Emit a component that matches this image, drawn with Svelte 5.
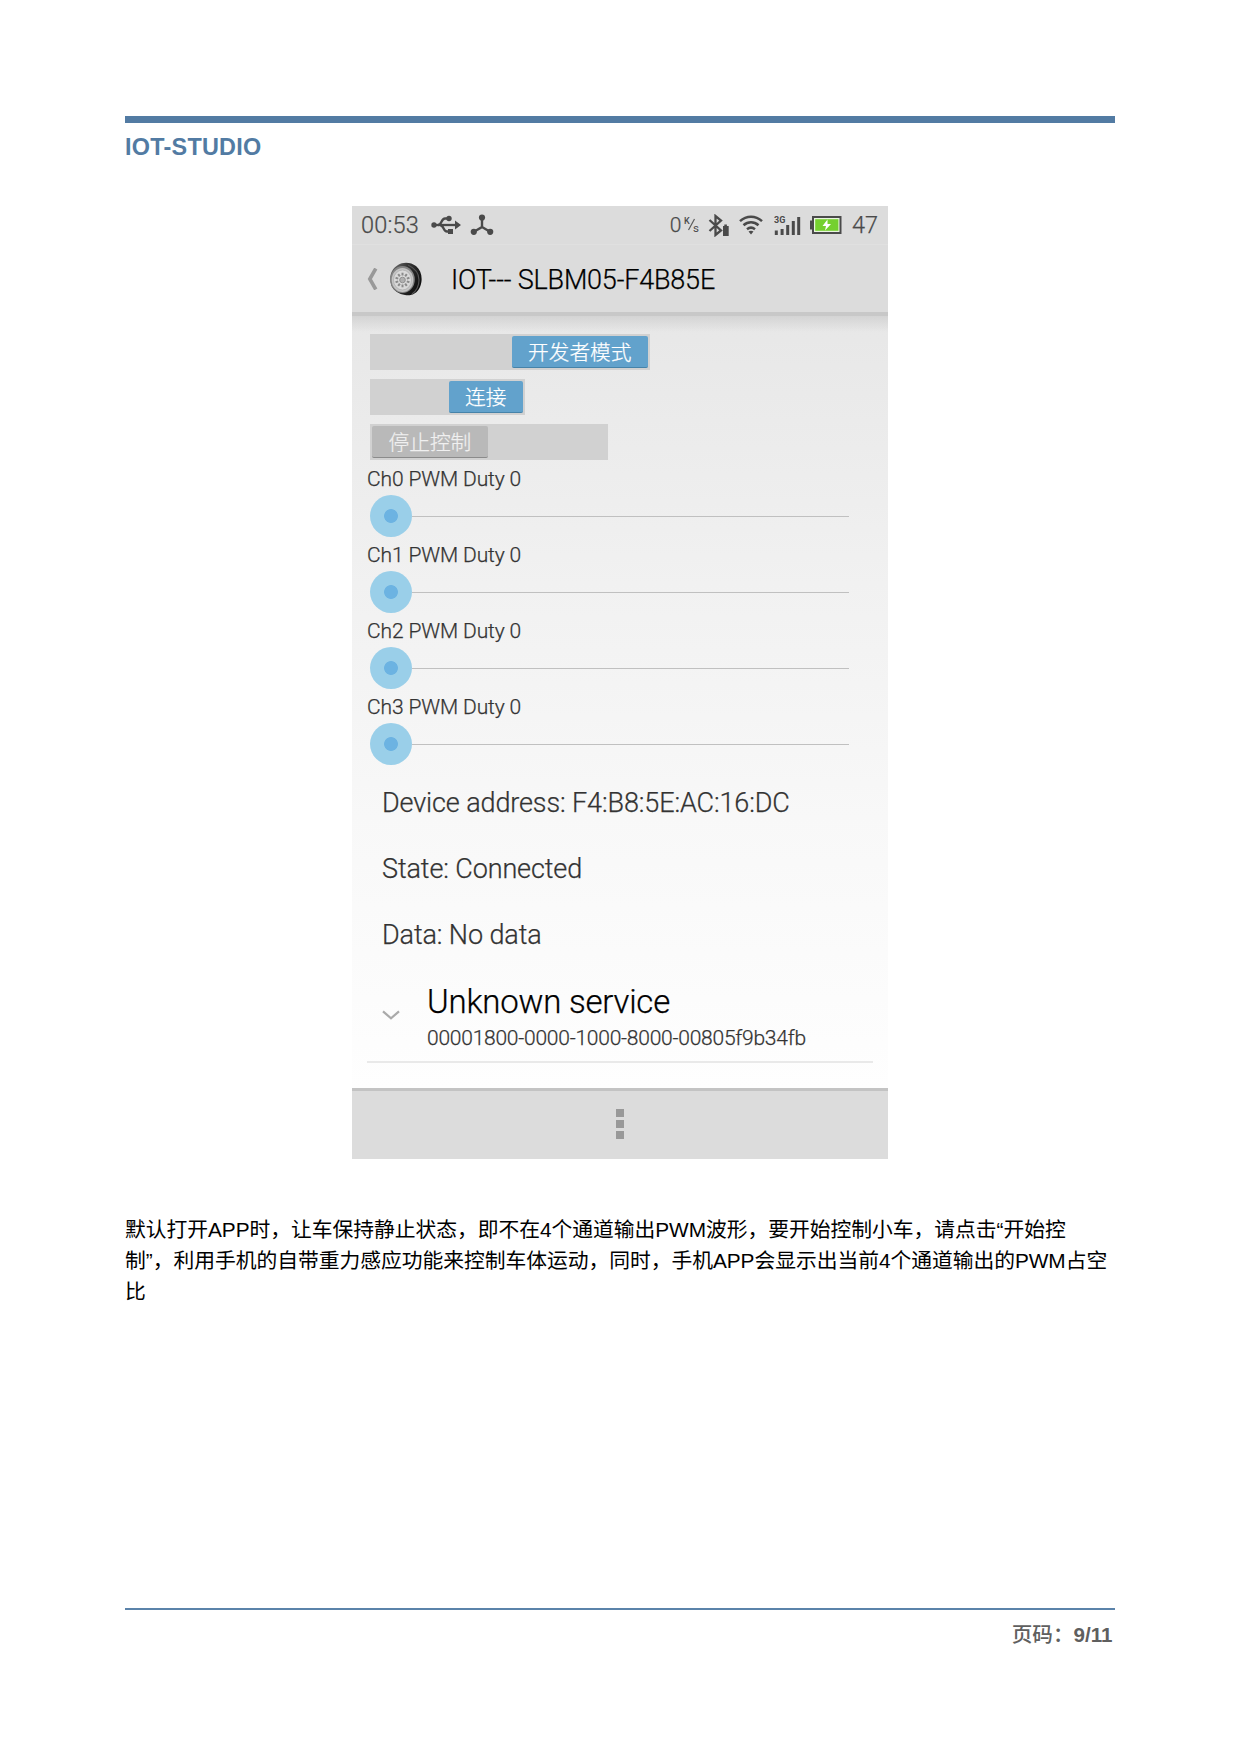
<script>
  const switches = [
    { text: '开发者模式', on: true, size: 'wide' },
    { text: '连接', on: true, size: 'small' },
    { text: '停止控制', on: false, size: 'medium' },
  ];
  const channels = [0, 1, 2, 3];
  const info = ['Device address: F4:B8:5E:AC:16:DC', 'State: Connected', 'Data: No data'];
  const spokes = Array.from({ length: 10 }, (_, i) => i * 36);
</script>

<div class="page">
  <header class="page-head">IOT-STUDIO</header>

  <main class="phone">
    <div class="status">
      <span class="time">00:53</span>
      <svg class="usb" width="30" height="20" viewBox="0 0 30 20">
        <g fill="none" stroke="#4a4a4a" stroke-width="2.300">
          <path d="M3 10H25" />
          <path d="M7 10C11 10 10 3.500 14 3.500H17" />
          <path d="M9 10C13 10 12 16.500 16 16.500H18" />
        </g>
        <g fill="#4a4a4a">
          <circle cx="3" cy="10" r="2.700" />
          <circle cx="18" cy="3.500" r="2.700" />
          <path d="M17 14h5v5h-5zM24 5.500L30 10L24 14.500z" />
        </g>
      </svg>
      <svg class="hub" width="24" height="22" viewBox="0 0 24 22">
        <path d="M12 4V13L3.500 18M12 13L20.500 18" fill="none" stroke="#4a4a4a" stroke-width="2.400" />
        <g fill="#4a4a4a"><circle cx="12" cy="3.500" r="3.100" /><circle cx="3.800" cy="17.800" r="3.100" /><circle cx="20.200" cy="17.800" r="3.100" /></g>
      </svg>
      <span class="space"></span>
      <span class="rate">0</span>
      <svg class="unit" width="16" height="18" viewBox="0 0 16 18">
        <text x="0" y="7.500" font-size="9" font-weight="500">K</text>
        <path d="M4.500 14L10.500 3" stroke="#5a5a5a" stroke-width="1.200" />
        <text x="9" y="15.500" font-size="11.500" font-weight="400">s</text>
      </svg>
      <svg class="bt" width="22" height="23" viewBox="0 0 22 23">
        <path d="M1.500 6L13 16.500L7.500 21V2L13 6.500L1.500 17" fill="none" stroke="#4a4a4a" stroke-width="2.300" />
        <path d="M15 12h1.300v-1.500h2.600V12h1.800v10h-5.700z" fill="#4a4a4a" />
      </svg>
      <svg class="wifi" width="24" height="20" viewBox="0 0 24 20">
        <g fill="none" stroke="#4a4a4a" stroke-width="2.500">
          <path d="M1 6.200C7.500 .2 16.500 .2 23 6.200" />
          <path d="M4.500 10.300C9 6.300 15 6.300 19.500 10.300" />
          <path d="M8 14.200C10.500 12.200 13.500 12.200 16 14.200" />
        </g>
        <path d="M9.500 16.500Q12 15 14.500 16.500L12 19.500z" fill="#4a4a4a" />
      </svg>
      <svg class="signal" width="27" height="21" viewBox="0 0 27 21">
        <text x="0" y="7.500" font-size="9" font-weight="700">3G</text>
        <path d="M.8 15.500h3V20h-3zM6.600 14h3v6h-3zM12.200 10h3v10h-3zM17.800 6h3v14h-3zM23.200 2h3v18h-3z" fill="#4a4a4a" />
      </svg>
      <svg class="battery" width="32" height="18" viewBox="0 0 32 18">
        <path d="M0 4.500h3v9H0z" fill="#4a4a4a" />
        <rect x="3" y="1" width="27.500" height="16" fill="#e9f5df" stroke="#4a4a4a" stroke-width="2" />
        <rect x="5.200" y="3.200" width="23.200" height="11.600" fill="#75d02f" />
        <path d="M17.500 3.500L12.500 10H16L15 14.500L21 8H17.500z" fill="#fff" />
      </svg>
      <span class="percent">47</span>
    </div>

    <div class="action-bar">
      <svg class="back" width="11" height="22" viewBox="0 0 11 22">
        <path d="M8.800 .5L2.800 11L8.800 21.500" fill="none" stroke="#999" stroke-width="3.600" />
      </svg>
      <svg class="wheel" width="34" height="34" viewBox="0 0 34 34">
        <defs>
          <linearGradient id="tyre" x1="0" y1="0" x2="1" y2=".5">
            <stop offset="0" stop-color="#777" /><stop offset=".5" stop-color="#333" /><stop offset="1" stop-color="#111" />
          </linearGradient>
        </defs>
        <path d="M9 3C14 -.5 22 0 27 4C33 9 34 18 31 25C28 32 22 34 16 33C10 32 5 29 2.500 24C-.5 15 2 7 9 3z" fill="url(#tyre)" />
        <path d="M19 3Q30 8 30 18Q30 27 23 32" stroke="#555" stroke-width="1.200" fill="none" />
        <ellipse cx="13.500" cy="17.500" rx="12.300" ry="13.500" fill="#858585" />
        <ellipse cx="13.500" cy="18" rx="10.800" ry="12" fill="#c4c4c4" />
        <ellipse cx="13.500" cy="18" rx="9" ry="10" fill="#dadada" stroke="#b0b0b0" stroke-width=".8" />
        {#each spokes as angle}
          <path d="M13.500 13.500V10.700" stroke="#8a8a8a" stroke-width="2" transform="rotate({angle} 13.500 18)" />
        {/each}
        <circle cx="13.500" cy="18" r="2.800" fill="#b0b0b0" stroke="#8a8a8a" stroke-width=".9" />
      </svg>
      <span class="title">IOT--- SLBM05-F4B85E</span>
    </div>

    <div class="content">
      <div class="switches">
        {#each switches as s}
          <div class="track {s.size}" class:on={s.on}><span class="knob">{s.text}</span></div>
        {/each}
      </div>
      {#each channels as n}
        <div class="channel">
          <span class="label">Ch{n} PWM Duty 0</span>
          <div class="slider"><span class="thumb"></span><span class="line"></span></div>
        </div>
      {/each}
      {#each info as row}
        <div class="info">{row}</div>
      {/each}
      <div class="service">
        <svg width="18" height="10" viewBox="0 0 18 10"><path d="M1 1.300L9 8.300L17 1.300" fill="none" stroke="#aaa" stroke-width="2.200" /></svg>
        <div class="service-text">
          <span class="name">Unknown service</span>
          <span class="uuid">00001800-0000-1000-8000-00805f9b34fb</span>
        </div>
      </div>
    </div>

    <div class="menu-bar"><i></i><i></i><i></i></div>
  </main>

  <p class="note">
    <span>默认打开APP时，让车保持静止状态，即不在4个通道输出PWM波形，要开始控制小车，请点击“开始控</span>
    <span>制”，利用手机的自带重力感应功能来控制车体运动，同时，手机APP会显示出当前4个通道输出的PWM占空</span>
    <span>比</span>
  </p>

  <footer class="page-foot"><span>页码：</span><b>9/11</b></footer>
</div>

<style>
  :global(body) { margin: 0; background: #fff; }
  .page {
    box-sizing: border-box;
    display: flex;
    flex-direction: column;
    width: 1239px;
    height: 1754px;
    padding: 116px 124.500px 0 125px;
    font-family: "Liberation Sans", "Noto Sans CJK SC", sans-serif;
  }
  .page-head {
    height: 83px;
    border-top: 7px solid #527ba3;
    color: #527ba3;
    font: 700 23.400px/49px "Liberation Sans", sans-serif;
    letter-spacing: .26px;
  }
  .phone {
    display: flex;
    flex-direction: column;
    width: 536px;
    height: 953px;
    margin-left: 227px;
    background: #dcdcdc;
    font-family: Roboto, "Noto Sans CJK SC", sans-serif;
    font-weight: 300;
    white-space: nowrap;
    -webkit-text-stroke: .25px currentColor;
  }
  .status {
    box-sizing: border-box;
    display: flex;
    align-items: center;
    height: 39px;
    padding: 0 10px 0 9px;
    border-bottom: 1px solid #e0e0e0;
    color: #4a4a4a;
    font-size: 23.500px;
  }
  .status text { font-family: Roboto, sans-serif; fill: #4a4a4a; -webkit-text-stroke: 0; }
  .time { letter-spacing: .2px; }
  .usb { margin-left: 11.500px; }
  .hub { margin-left: 9px; }
  .space { flex: 1; }
  .rate { font-size: 21px; }
  .unit { margin-left: 3px; }
  .bt { margin-left: 8px; }
  .wifi { margin-left: 9px; }
  .signal { margin-left: 11px; }
  .battery { margin-left: 9px; }
  .percent { margin-left: 9.500px; }
  .action-bar {
    display: flex;
    align-items: center;
    height: 67px;
    padding-left: 15px;
    color: #000;
  }
  .wheel { margin-left: 11px; }
  .title { margin-left: 28px; padding-top: 3px; font-size: 27px; letter-spacing: -.19px; }
  .content {
    box-sizing: border-box;
    height: 776px;
    padding-top: 22px;
    background:
      linear-gradient(#c8c8c8 0 4px, #d4d4d4 4px, rgba(228, 228, 228, 0) 20px),
      linear-gradient(#e7e7e7, #f1f1f1 35%, #f8f8f8 65%, #fefefe);
    color: #333;
  }
  .switches {
    display: flex;
    flex-direction: column;
    gap: 9px;
    height: 132px;
    padding-left: 18px;
  }
  .track {
    box-sizing: border-box;
    display: flex;
    height: 36px;
    padding: 2px;
    background: #d1d1d1;
  }
  .track.on { justify-content: flex-end; }
  .wide { width: 280px; }
  .small { width: 155px; }
  .medium { width: 238px; }
  .knob {
    box-sizing: border-box;
    height: 32px;
    padding: 2px 16.500px 0;
    border-radius: 2px;
    border-bottom: 1px solid #8b8b8b;
    background: #b9b9b9;
    color: #f0f0f0;
    font-size: 20.700px;
    line-height: 31px;
  }
  .on .knob { border-color: #4683a9; background: #62a2cc; color: #fff; }
  .channel { height: 76px; }
  .label { display: block; height: 26px; margin-left: 15px; font-size: 21px; line-height: 27px; letter-spacing: -.12px; }
  .slider { display: flex; align-items: center; height: 42px; margin: 3px 39px 0 18px; }
  .thumb {
    box-sizing: border-box;
    width: 42px;
    height: 42px;
    border-radius: 50%;
    background: radial-gradient(circle, #6cb3e2 6.500px, #9acfe9 7.300px);
  }
  .line { flex: 1; height: 1px; background: #c0c0c0; }
  .info { height: 66px; padding-left: 30px; font-size: 27px; line-height: 66px; letter-spacing: -.12px; }
  .service {
    box-sizing: border-box;
    display: flex;
    align-items: flex-start;
    height: 95px;
    margin: 0 15px;
    padding: 14px 0 0 15px;
    border-bottom: 2px solid #e9e9e9;
  }
  .service svg { margin-top: 28px; }
  .service-text { display: flex; flex-direction: column; gap: 3px; margin-left: 27px; }
  .name { height: 40px; color: #000; font-size: 33px; line-height: 40px; letter-spacing: -.22px; }
  .uuid { font-size: 21px; line-height: 26px; letter-spacing: -.24px; }
  .menu-bar {
    box-sizing: border-box;
    display: flex;
    flex-direction: column;
    align-items: center;
    gap: 3px;
    height: 71px;
    padding-top: 18px;
    border-top: 3px solid #c3c3c3;
  }
  .menu-bar i { width: 8px; height: 8px; background: #999; }
  .note {
    display: flex;
    flex-direction: column;
    margin: 55px 0 0;
    color: #000;
    font-size: 20.800px;
    letter-spacing: -.045px;
    white-space: nowrap;
  }
  .note span { height: 31px; line-height: 32px; }
  .page-foot {
    display: flex;
    justify-content: flex-end;
    margin-top: 300.500px;
    padding-right: 2px;
    border-top: 2px solid #5b83aa;
    color: #5f5f5f;
    font-size: 20.600px;
    font-weight: 500;
    line-height: 49px;
  }
</style>
